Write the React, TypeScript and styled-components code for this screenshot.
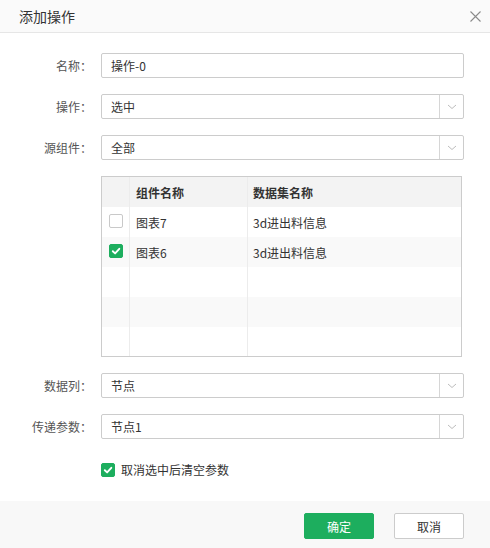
import React, { useState } from "react";
import styled, { createGlobalStyle } from "styled-components";

const GlobalStyle = createGlobalStyle`
  html, body {
    margin: 0;
    padding: 0;
    background: #fff;
  }
  body {
    font-family: "Noto Sans CJK SC", "Liberation Sans", sans-serif;
    font-size: 12px;
    color: #333;
  }
`;

interface RowData {
  id: string;
  name: string;
  dataset: string;
  checked: boolean;
}

const initialRows: RowData[] = [
  { id: "c7", name: "图表7", dataset: "3d进出料信息", checked: false },
  { id: "c6", name: "图表6", dataset: "3d进出料信息", checked: true },
];

const CheckMark = () => (
  <svg width="10" height="10" viewBox="0 0 10 10">
    <path
      d="M1.8 5.2 L4.1 7.4 L8.3 2.8"
      fill="none"
      stroke="#fff"
      strokeWidth="1.9"
      strokeLinecap="round"
      strokeLinejoin="round"
    />
  </svg>
);

const Checkbox: React.FC<{ checked: boolean; onClick?: () => void }> = ({
  checked,
  onClick,
}) => (
  <Box $checked={checked} onClick={onClick}>
    {checked && <CheckMark />}
  </Box>
);

const Select: React.FC<{ value: string }> = ({ value }) => (
  <SelectBox>
    <SelectValue>{value}</SelectValue>
    <SelectArrow>
      <svg width="10" height="6" viewBox="0 0 10 6">
        <path d="M1 1 L5 4.5 L9 1" fill="none" stroke="#bdbdbd" strokeWidth="1" />
      </svg>
    </SelectArrow>
  </SelectBox>
);

const App: React.FC = () => {
  const [rows, setRows] = useState(initialRows);
  const [clearOnCancel, setClearOnCancel] = useState(true);
  const empty = Array.from({ length: 5 - rows.length });

  const toggleRow = (id: string) => {
    setRows(rows.map((r) => (r.id === id ? { ...r, checked: !r.checked } : r)));
  };

  return (
    <>
      <GlobalStyle />
      <Dialog>
        <Header>
          <Title>添加操作</Title>
          <CloseButton>
            <svg width="11" height="11" viewBox="0 0 11 11">
              <path d="M0.5 0.5 L10.5 10.5 M10.5 0.5 L0.5 10.5" stroke="#8a8a8a" strokeWidth="1.1" />
            </svg>
          </CloseButton>
        </Header>
        <Body>
          <FormRow>
            <Label>名称：</Label>
            <TextInput defaultValue="操作-0" />
          </FormRow>
          <FormRow>
            <Label>操作：</Label>
            <Select value="选中" />
          </FormRow>
          <FormRow>
            <Label>源组件：</Label>
            <Select value="全部" />
          </FormRow>
          <FormRow>
            <Label />
            <Table>
              <HeadRow>
                <CheckCell />
                <NameCell $head>组件名称</NameCell>
                <DataCell $head>数据集名称</DataCell>
              </HeadRow>
              {rows.map((r, i) => (
                <TableRow key={r.id} $stripe={i % 2 === 1}>
                  <CheckCell>
                    <Checkbox checked={r.checked} onClick={() => toggleRow(r.id)} />
                  </CheckCell>
                  <NameCell>{r.name}</NameCell>
                  <DataCell>{r.dataset}</DataCell>
                </TableRow>
              ))}
              {empty.map((_, i) => (
                <TableRow key={"e" + i} $stripe={(rows.length + i) % 2 === 1}>
                  <CheckCell />
                  <NameCell />
                  <DataCell />
                </TableRow>
              ))}
            </Table>
          </FormRow>
          <FormRow>
            <Label>数据列：</Label>
            <Select value="节点" />
          </FormRow>
          <FormRow>
            <Label>传递参数：</Label>
            <Select value="节点1" />
          </FormRow>
          <OptionRow onClick={() => setClearOnCancel(!clearOnCancel)}>
            <Checkbox checked={clearOnCancel} />
            <span>取消选中后清空参数</span>
          </OptionRow>
        </Body>
        <Footer>
          <Button $primary>确定</Button>
          <Button>取消</Button>
        </Footer>
      </Dialog>
    </>
  );
};

export default App;

const Dialog = styled.div`
  width: 490px;
  height: 548px;
  display: flex;
  flex-direction: column;
  background: #fff;
  box-sizing: border-box;
`;

const Header = styled.div`
  height: 33px;
  box-sizing: border-box;
  display: flex;
  align-items: center;
  justify-content: space-between;
  padding: 0 9px 0 19px;
  background: #fafafa;
  border-bottom: 1px solid #e6e6e6;
`;

const Title = styled.div`
  font-size: 14px;
  color: #333;
  line-height: 32px;
`;

const CloseButton = styled.div`
  width: 11px;
  height: 11px;
  display: flex;
  cursor: pointer;
`;

const Body = styled.div`
  flex: 1;
  display: flex;
  flex-direction: column;
  gap: 16px;
  padding: 20px 26px 0 0;
`;

const FormRow = styled.div`
  display: flex;
  align-items: center;
`;

const Label = styled.div`
  width: 101px;
  flex-shrink: 0;
  box-sizing: border-box;
  padding-right: 9px;
  text-align: right;
  color: #555;
  font-size: 12px;
`;

const TextInput = styled.input`
  flex: 1;
  height: 25px;
  box-sizing: border-box;
  border: 1px solid #ccc;
  border-radius: 2px;
  padding: 0 9px;
  font-family: inherit;
  font-size: 12px;
  color: #333;
  outline: none;
`;

const SelectBox = styled.div`
  flex: 1;
  height: 25px;
  box-sizing: border-box;
  border: 1px solid #ccc;
  border-radius: 2px;
  display: flex;
  align-items: stretch;
`;

const SelectValue = styled.div`
  flex: 1;
  display: flex;
  align-items: center;
  padding-left: 9px;
  color: #333;
`;

const SelectArrow = styled.div`
  width: 23px;
  border-left: 1px solid #d6d6d6;
  display: flex;
  align-items: center;
  justify-content: center;
`;

const Table = styled.div`
  flex: 1;
  margin-right: 2px;
  border: 1px solid #ccc;
  display: flex;
  flex-direction: column;
`;

const TableRow = styled.div<{ $stripe?: boolean }>`
  height: 30px;
  display: flex;
  background: ${(p) => (p.$stripe ? "#f9f9f9" : "#fff")};
  &:last-child {
    height: 29px;
  }
`;

const HeadRow = styled(TableRow)`
  background: #f3f3f3;
  font-weight: bold;
`;

const CheckCell = styled.div`
  width: 28px;
  flex-shrink: 0;
  border-right: 1px solid #ececec;
  display: flex;
  align-items: center;
  justify-content: center;
  padding-bottom: 3px;
  box-sizing: border-box;
`;

const NameCell = styled.div<{ $head?: boolean }>`
  width: 118px;
  flex-shrink: 0;
  border-right: 1px solid #ececec;
  display: flex;
  align-items: center;
  padding-left: 6px;
  box-sizing: border-box;
  color: #333;
  font-weight: ${(p) => (p.$head ? 600 : 400)};
`;

const DataCell = styled(NameCell)`
  flex: 1;
  width: auto;
  border-right: none;
  padding-left: 5px;
`;

const Box = styled.span<{ $checked: boolean }>`
  width: 14px;
  height: 14px;
  box-sizing: border-box;
  border-radius: 2px;
  border: 1px solid ${(p) => (p.$checked ? "#1dae5e" : "#c9c9c9")};
  background: ${(p) => (p.$checked ? "#1dae5e" : "#fff")};
  display: inline-flex;
  align-items: center;
  justify-content: center;
  cursor: pointer;
  flex-shrink: 0;
`;

const OptionRow = styled.div`
  display: flex;
  align-items: center;
  gap: 6px;
  margin-top: 6px;
  padding-left: 101px;
  color: #333;
  cursor: pointer;
`;

const Footer = styled.div`
  height: 47px;
  box-sizing: border-box;
  background: #f8f8f8;
  display: flex;
  justify-content: flex-end;
  align-items: flex-start;
  gap: 20px;
  padding: 12px 26px 0 0;
`;

const Button = styled.button<{ $primary?: boolean }>`
  width: 70px;
  height: 26px;
  box-sizing: border-box;
  border-radius: 2px;
  font-family: inherit;
  font-size: 12px;
  cursor: pointer;
  border: 1px solid ${(p) => (p.$primary ? "#1dae5e" : "#ccc")};
  background: ${(p) => (p.$primary ? "#1dae5e" : "#fff")};
  color: ${(p) => (p.$primary ? "#fff" : "#333")};
`;
